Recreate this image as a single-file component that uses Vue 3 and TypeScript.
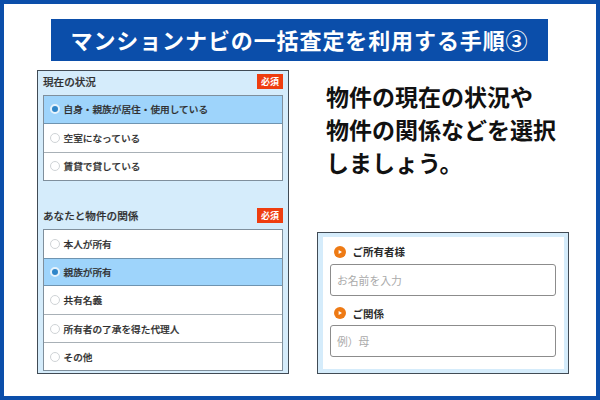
<script setup lang="ts">
interface Option { label: string; checked?: boolean }
const status: Option[] = [
  { label: '自身・親族が居住・使用している', checked: true },
  { label: '空室になっている' },
  { label: '賃貸で貸している' },
]
const relation: Option[] = [
  { label: '本人が所有' },
  { label: '親族が所有', checked: true },
  { label: '共有名義' },
  { label: '所有者の了承を得た代理人' },
  { label: 'その他' },
]
const fields = [
  { label: 'ご所有者様', placeholder: 'お名前を入力' },
  { label: 'ご関係', placeholder: '例）母' },
]
</script>

<template>
  <div class="frame">
    <h1 class="title">マンションナビの一括査定を利用する手順③</h1>
    <div class="columns">
      <section class="shot form">
        <div class="head">
          <span class="label">現在の状況</span><span class="badge">必須</span>
        </div>
        <ul class="list">
          <li v-for="o in status" :key="o.label" class="row" :class="{ on: o.checked }">
            <span class="radio"></span>{{ o.label }}
          </li>
        </ul>
        <div class="head second">
          <span class="label">あなたと物件の関係</span><span class="badge">必須</span>
        </div>
        <ul class="list">
          <li v-for="o in relation" :key="o.label" class="row" :class="{ on: o.checked }">
            <span class="radio"></span>{{ o.label }}
          </li>
        </ul>
      </section>
      <div class="side">
        <p class="lead">物件の現在の状況や<br />物件の関係などを選択<br />しましょう。</p>
        <section class="shot owner">
          <div class="inner">
            <div v-for="f in fields" :key="f.label" class="field">
              <div class="field-label">
                <svg class="arrow" width="12" height="12" viewBox="0 0 12 12">
                  <circle cx="6" cy="6" r="6" fill="#ee7a14" />
                  <path d="M4.6 4 L8 6 L4.6 8 Z" fill="#fff" />
                </svg>
                {{ f.label }}
              </div>
              <div class="input">{{ f.placeholder }}</div>
            </div>
          </div>
        </section>
      </div>
    </div>
  </div>
</template>

<style>
html, body { margin: 0; padding: 0; background: #fff; }
</style>

<style scoped>
.frame {
  width: 600px;
  height: 400px;
  box-sizing: border-box;
  border: 4px solid #0b4eaa;
  background: #fff;
  padding: 15px 27px 0 33px;
  font-family: "Noto Sans CJK JP", "Noto Sans", sans-serif;
  color: #333;
}
.title {
  margin: 0 21px 0 14px;
  height: 42px;
  background: #0b4eaa;
  color: #fff;
  font-size: 22px;
  font-weight: 700;
  letter-spacing: 0.9px;
  line-height: 41px;
  text-align: center;
  white-space: nowrap;
}
.columns {
  display: flex;
  gap: 28px;
  margin-top: 9px;
  align-items: stretch;
}
.shot {
  box-sizing: border-box;
  width: 252px;
  flex: none;
  border: 1.5px solid #414b55;
  background: #d5ecfb;
}
.form {
  height: 304px;
  padding: 3px 5px 0;
}
.head {
  display: flex;
  align-items: center;
  justify-content: space-between;
  height: 15px;
  margin-bottom: 5.5px;
}
.head.second { margin-top: 27px; margin-bottom: 6px; }
.label {
  font-size: 10.6px;
  font-weight: 500;
  color: #2e2e2e;
  -webkit-text-stroke: 0.2px #2e2e2e;
}
.badge {
  width: 26px;
  height: 15px;
  background: #ee3d0f;
  color: #fff;
  font-size: 9px;
  font-weight: 700;
  line-height: 15px;
  text-align: center;
}
.list {
  list-style: none;
  margin: 0;
  padding: 0;
  background: #fff;
  border: 1px solid #7f8f9c;
}
.row {
  box-sizing: border-box;
  height: 28.1px;
  display: flex;
  align-items: center;
  padding-left: 5.5px;
  font-size: 9.67px;
  font-weight: 500;
  color: #2e2e2e;
  -webkit-text-stroke: 0.2px #2e2e2e;
  border-top: 1px solid #a8b0b6;
  white-space: nowrap;
}
.row:first-child { border-top: 0; }
.row.on {
  background: #9ed4fb;
  border-top-color: #6f94b0;
  border-bottom: 1px solid #6f94b0;
}
.row.on + .row { border-top: 0; }
.radio {
  box-sizing: border-box;
  width: 10px;
  height: 10px;
  margin-right: 4px;
  border-radius: 50%;
  border: 1px solid #cfd3d6;
  background: #fff;
  flex: none;
}
.row.on .radio {
  border: 2px solid #e6f3fc;
  background: #2f86c9;
}
.side {
  display: flex;
  flex-direction: column;
  justify-content: space-between;
  width: 252px;
  flex: none;
}
.lead {
  margin: 10px 0 0 9px;
  font-size: 23px;
  font-weight: 700;
  line-height: 33px;
  color: #111;
  white-space: nowrap;
}
.owner {
  height: 142px;
  padding: 4px 4.5px;
}
.inner {
  box-sizing: border-box;
  height: 100%;
  background: #fff;
  padding: 7.5px 7.5px 7.5px 7px;
  display: flex;
  flex-direction: column;
  gap: 10.5px;
}
.field-label {
  display: flex;
  align-items: center;
  gap: 7px;
  height: 14px;
  padding-left: 4px;
  margin-bottom: 5px;
  font-size: 10.5px;
  font-weight: 700;
  color: #2a2a2a;
}
.arrow { flex: none; }
.input {
  box-sizing: border-box;
  height: 32px;
  border: 1px solid #8c8c8c;
  border-radius: 3px;
  padding-left: 6.5px;
  font-size: 10.8px;
  line-height: 30px;
  color: #aaa;
  background: #fff;
}
.field:last-child .input { border-width: 1.5px; }
</style>
